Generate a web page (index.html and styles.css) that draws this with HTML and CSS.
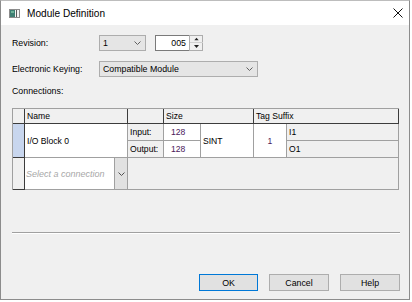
FILE: index.html
```html
<!DOCTYPE html>
<html lang="en">
<head>
    <meta charset="UTF-8">
    <title>Module Definition</title>
    <link rel="stylesheet" href="styles.css">
</head>
<body>
    <div class="window">
        <div class="titlebar">
            <svg class="app-icon" width="11" height="9" viewBox="0 0 11 9">
                <rect x="0.5" y="0.5" width="10" height="8" fill="#f4f4f4" stroke="#8c8c8c"/>
                <rect x="1" y="1" width="5" height="7" fill="#3f7f73"/>
                <rect x="2" y="2" width="3" height="2" fill="#6fb39a"/>
                <rect x="7" y="1" width="1" height="7" fill="#5a5a5a"/>
            </svg>
            <span class="title">Module Definition</span>
            <svg class="close-btn" width="10" height="10" viewBox="0 0 10 10">
                <path d="M0.5 0.5 L9.5 9.5 M9.5 0.5 L0.5 9.5" stroke="#111" stroke-width="1"/>
            </svg>
        </div>

        <div class="content">
            <div class="field-row">
                <span class="field-label">Revision:</span>
                <div class="combo combo-rev">
                    <span>1</span>
                    <svg class="chevron" width="7" height="4" viewBox="0 0 7 4"><path d="M0.5 0.5 L3.5 3.5 L6.5 0.5" fill="none" stroke="#606060"/></svg>
                </div>
                <div class="spin">
                    <span class="spin-value">005</span>
                    <div class="spin-buttons">
                        <svg width="13" height="7" viewBox="0 0 13 7"><path d="M4 5 L9 5 L6.5 2 Z" fill="#222"/></svg>
                        <svg width="13" height="7" viewBox="0 0 13 7"><path d="M4 2 L9 2 L6.5 5 Z" fill="#222"/></svg>
                    </div>
                </div>
            </div>

            <div class="field-row row-gap">
                <span class="field-label">Electronic Keying:</span>
                <div class="combo combo-keying">
                    <span>Compatible Module</span>
                    <svg class="chevron" width="7" height="4" viewBox="0 0 7 4"><path d="M0.5 0.5 L3.5 3.5 L6.5 0.5" fill="none" stroke="#606060"/></svg>
                </div>
            </div>

            <div class="section-label">Connections:</div>

            <div class="grid">
                <div class="hd"></div>
                <div class="hd">Name</div>
                <div class="hd"></div>
                <div class="hd span-2">Size</div>
                <div class="hd span-2">Tag Suffix</div>

                <div class="rowhead selected tall"></div>
                <div class="cell tall">I/O Block 0</div>
                <div class="cell label">Input:</div>
                <div class="cell value">128</div>
                <div class="cell tall">SINT</div>
                <div class="cell value center tall">1</div>
                <div class="cell label">I1</div>
                <div class="cell label">Output:</div>
                <div class="cell value">128</div>
                <div class="cell label">O1</div>

                <div class="rowhead"></div>
                <div class="cell picker">
                    <span class="placeholder">Select a connection</span>
                    <span class="picker-btn">
                        <svg width="7" height="4" viewBox="0 0 7 4"><path d="M0.5 0.5 L3.5 3.5 L6.5 0.5" fill="none" stroke="#505050"/></svg>
                    </span>
                </div>
                <div class="cell empty"></div>
            </div>

            <div class="separator"></div>

            <div class="buttons">
                <button class="btn default">OK</button>
                <button class="btn">Cancel</button>
                <button class="btn">Help</button>
            </div>
        </div>
    </div>
</body>
</html>
```

FILE: styles.css
```css
body {
    margin: 0;
    background: #ffffff;
    font-family: "Liberation Sans", Arial, sans-serif;
    font-size: 8.8px;
    color: #000;
}
.window {
    width: 410px;
    height: 300px;
    box-sizing: border-box;
    border: 1px solid #8c8c8c;
    border-top-color: #bdbdbd;
    background: #f0f0f0;
    display: flex;
    flex-direction: column;
}
.titlebar {
    height: 24px;
    flex: none;
    background: #ffffff;
    display: flex;
    align-items: center;
    padding: 0 6px 0 8px;
}
.app-icon {
    margin-right: 7px;
}
.title {
    font-size: 10.1px;
    color: #000;
}
.close-btn {
    margin-left: auto;
}
.content {
    padding: 10px 9px 0 11px;
    display: flex;
    flex-direction: column;
}
.field-row {
    display: flex;
    align-items: center;
    height: 16px;
}
.row-gap {
    margin-top: 10px;
}
.field-label {
    width: 87px;
    flex: none;
}
.combo {
    height: 16px;
    box-sizing: border-box;
    border: 1px solid #adadad;
    background: #e5e5e5;
    display: flex;
    align-items: center;
    justify-content: space-between;
    padding: 0 4px 0 3px;
}
.combo-rev {
    width: 47px;
}
.combo-keying {
    width: 159px;
}
.spin {
    margin-left: 9px;
    display: flex;
    height: 16px;
}
.spin-value {
    width: 34px;
    box-sizing: border-box;
    border: 1px solid #7a7a7a;
    border-right: none;
    background: #ffffff;
    text-align: right;
    padding-right: 3px;
    line-height: 14px;
}
.spin-buttons {
    width: 14px;
    box-sizing: border-box;
    border: 1px solid #adadad;
    background: #f0f0f0;
    display: flex;
    flex-direction: column;
}
.spin-buttons svg {
    display: block;
}
.spin-buttons svg:first-child {
    border-bottom: 1px solid #d0d0d0;
    height: 6px;
}
.section-label {
    margin-top: 9px;
    height: 11px;
    line-height: 11px;
}
.grid {
    margin-top: 11px;
    display: grid;
    grid-template-columns: 12px 103px 36px 37px 53px 33px 112px;
    grid-template-rows: 15px 17px 17px 32px;
    width: 387px;
    box-sizing: border-box;
    border-top: 1px solid #a0a0a0;
    border-left: 1px solid #a0a0a0;
    font-size: 8.6px;
}
.grid > div {
    box-sizing: border-box;
    border-right: 1px solid #a0a0a0;
    border-bottom: 1px solid #a0a0a0;
    display: flex;
    align-items: center;
    padding-left: 2px;
    white-space: nowrap;
}
.grid > .hd {
    background: #f0f0f0;
    border-right-color: #3c3c3c;
    border-bottom-color: #3c3c3c;
}
.grid > .rowhead {
    background: #f0f0f0;
    border-right-color: #3c3c3c;
    border-bottom-color: #3c3c3c;
}
.grid > .selected {
    background: #c8d6ee;
}
.span-2 {
    grid-column: span 2;
}
.tall {
    grid-row: span 2;
}
.cell {
    background: #ffffff;
}
.grid > .label {
    background: #f0f0f0;
}
.grid > .value {
    color: #4a1a5a;
    padding-left: 7px;
}
.grid > .center {
    justify-content: center;
    padding-left: 0;
}
.grid > .picker {
    padding-left: 0;
    justify-content: space-between;
    align-items: stretch;
}
.placeholder {
    font-style: italic;
    font-size: 9px;
    color: #a8a8a8;
    display: flex;
    align-items: center;
    padding-left: 1px;
}
.picker-btn {
    width: 13px;
    box-sizing: border-box;
    border-left: 1px solid #a0a0a0;
    background: #e1e1e1;
    display: flex;
    align-items: center;
    justify-content: center;
}
.grid > .empty {
    grid-column: span 5;
    background: #f0f0f0;
}
.separator {
    margin-top: 42px;
    border-top: 1px solid #a0a0a0;
    border-bottom: 1px solid #ffffff;
}
.buttons {
    margin-top: 40px;
    display: flex;
    justify-content: flex-end;
    gap: 11px;
}
.btn {
    width: 60px;
    height: 17px;
    box-sizing: border-box;
    border: 1px solid #adadad;
    background: #e1e1e1;
    font-family: "Liberation Sans", Arial, sans-serif;
    font-size: 8.8px;
    color: #000;
    padding: 0;
}
.btn.default {
    width: 59px;
    border-color: #0078d7;
}
```
